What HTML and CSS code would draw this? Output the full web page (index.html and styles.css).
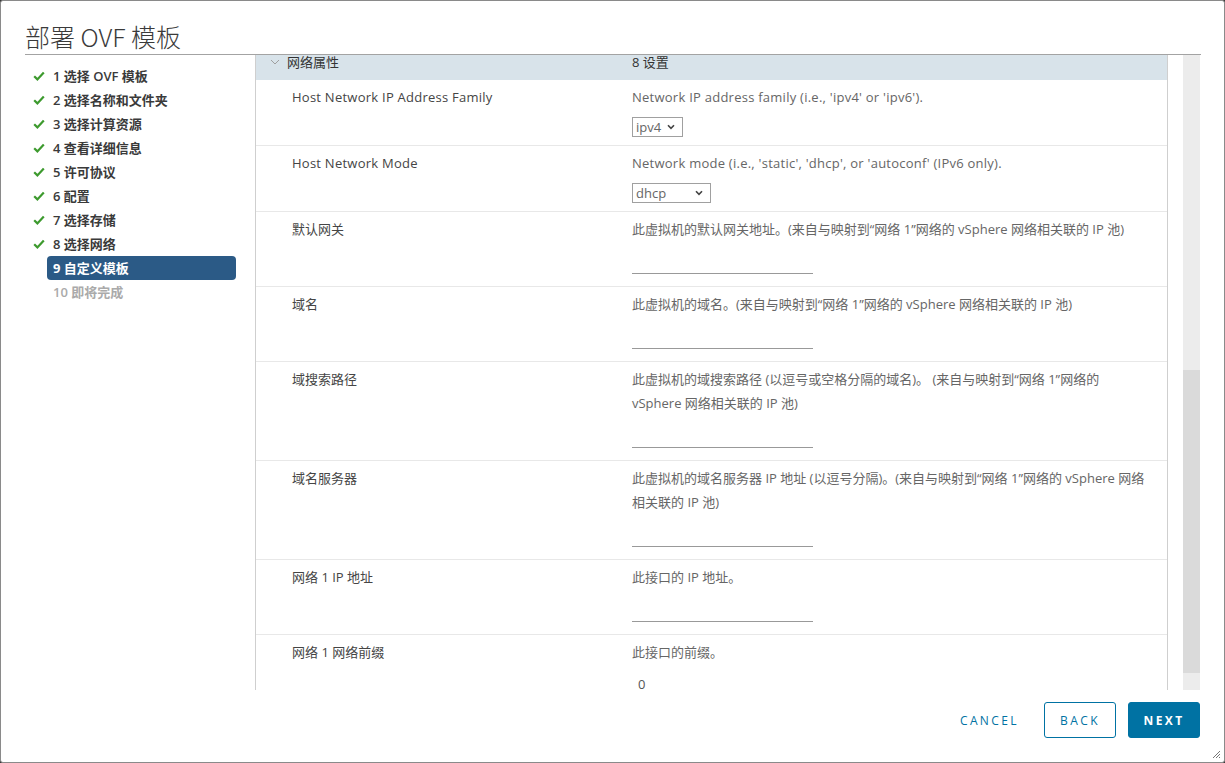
FILE: index.html
```html
<!DOCTYPE html>
<html lang="zh-CN">
<head>
<meta charset="utf-8">
<title>部署 OVF 模板</title>
<link rel="stylesheet" href="styles.css">
</head>
<body>
<div class="dialog">
  <div class="head"><h1 class="title">部署 OVF 模板</h1></div>
  <div class="body">
    <nav class="nav">
      <div class="step done"><svg class="chk" viewBox="0 0 12 10" width="12" height="10"><path d="M1.2 5.2 L4.4 8.4 L10.8 1.4" fill="none" stroke="#3d9a2e" stroke-width="2.2"/></svg><span class="lbl">1 选择 OVF 模板</span></div>
      <div class="step done"><svg class="chk" viewBox="0 0 12 10" width="12" height="10"><path d="M1.2 5.2 L4.4 8.4 L10.8 1.4" fill="none" stroke="#3d9a2e" stroke-width="2.2"/></svg><span class="lbl">2 选择名称和文件夹</span></div>
      <div class="step done"><svg class="chk" viewBox="0 0 12 10" width="12" height="10"><path d="M1.2 5.2 L4.4 8.4 L10.8 1.4" fill="none" stroke="#3d9a2e" stroke-width="2.2"/></svg><span class="lbl">3 选择计算资源</span></div>
      <div class="step done"><svg class="chk" viewBox="0 0 12 10" width="12" height="10"><path d="M1.2 5.2 L4.4 8.4 L10.8 1.4" fill="none" stroke="#3d9a2e" stroke-width="2.2"/></svg><span class="lbl">4 查看详细信息</span></div>
      <div class="step done"><svg class="chk" viewBox="0 0 12 10" width="12" height="10"><path d="M1.2 5.2 L4.4 8.4 L10.8 1.4" fill="none" stroke="#3d9a2e" stroke-width="2.2"/></svg><span class="lbl">5 许可协议</span></div>
      <div class="step done"><svg class="chk" viewBox="0 0 12 10" width="12" height="10"><path d="M1.2 5.2 L4.4 8.4 L10.8 1.4" fill="none" stroke="#3d9a2e" stroke-width="2.2"/></svg><span class="lbl">6 配置</span></div>
      <div class="step done"><svg class="chk" viewBox="0 0 12 10" width="12" height="10"><path d="M1.2 5.2 L4.4 8.4 L10.8 1.4" fill="none" stroke="#3d9a2e" stroke-width="2.2"/></svg><span class="lbl">7 选择存储</span></div>
      <div class="step done"><svg class="chk" viewBox="0 0 12 10" width="12" height="10"><path d="M1.2 5.2 L4.4 8.4 L10.8 1.4" fill="none" stroke="#3d9a2e" stroke-width="2.2"/></svg><span class="lbl">8 选择网络</span></div>
      <div class="step active"><span class="chk-space"></span><span class="lbl">9 自定义模板</span></div>
      <div class="step todo"><span class="chk-space"></span><span class="lbl">10 即将完成</span></div>
    </nav>
    <div class="panel">
      <div class="table">
        <div class="group">
          <svg class="caret" viewBox="0 0 10 6" width="10" height="6"><path d="M1 1 L5 5 L9 1" fill="none" stroke="#a0a0a0" stroke-width="1"/></svg>
          <span class="gname">网络属性</span>
          <span class="gcount">8 设置</span>
        </div>
        <div class="row sel">
          <div class="label en">Host Network IP Address Family</div>
          <div class="desc">
            <div class="text en">Network IP address family (i.e., 'ipv4' or 'ipv6').</div>
            <div class="select w-ipv4"><span>ipv4</span><svg viewBox="0 0 8 6" width="8" height="6"><path d="M1 1.2 L4 4.4 L7 1.2" fill="none" stroke="#444" stroke-width="1.6"/></svg></div>
          </div>
        </div>
        <div class="row sel">
          <div class="label en">Host Network Mode</div>
          <div class="desc">
            <div class="text en">Network mode (i.e., 'static', 'dhcp', or 'autoconf' (IPv6 only).</div>
            <div class="select w-dhcp"><span>dhcp</span><svg viewBox="0 0 8 6" width="8" height="6"><path d="M1 1.2 L4 4.4 L7 1.2" fill="none" stroke="#444" stroke-width="1.6"/></svg></div>
          </div>
        </div>
        <div class="row inp">
          <div class="label">默认网关</div>
          <div class="desc">
            <div class="text">此虚拟机的默认网关地址。(来自与映射到“网络 1”网络的 vSphere 网络相关联的 IP 池)</div>
            <div class="input"></div>
          </div>
        </div>
        <div class="row inp">
          <div class="label">域名</div>
          <div class="desc">
            <div class="text">此虚拟机的域名。(来自与映射到“网络 1”网络的 vSphere 网络相关联的 IP 池)</div>
            <div class="input"></div>
          </div>
        </div>
        <div class="row inp">
          <div class="label">域搜索路径</div>
          <div class="desc">
            <div class="text">此虚拟机的域搜索路径 (以逗号或空格分隔的域名)。 (来自与映射到“网络 1”网络的 vSphere 网络相关联的 IP 池)</div>
            <div class="input"></div>
          </div>
        </div>
        <div class="row inp">
          <div class="label">域名服务器</div>
          <div class="desc">
            <div class="text">此虚拟机的域名服务器 IP 地址 (以逗号分隔)。(来自与映射到“网络 1”网络的 vSphere 网络相关联的 IP 池)</div>
            <div class="input"></div>
          </div>
        </div>
        <div class="row inp">
          <div class="label">网络 1 IP 地址</div>
          <div class="desc">
            <div class="text">此接口的 IP 地址。</div>
            <div class="input"></div>
          </div>
        </div>
        <div class="row inp">
          <div class="label">网络 1 网络前缀</div>
          <div class="desc">
            <div class="text">此接口的前缀。</div>
            <div class="input">0</div>
          </div>
        </div>
      </div>
      <div class="scrollbar"><div class="thumb"></div></div>
    </div>
  </div>
  <div class="foot">
    <button class="btn flat">Cancel</button>
    <button class="btn outline">Back</button>
    <button class="btn primary">Next</button>
  </div>
  <svg class="grip" viewBox="0 0 10 10" width="10" height="10"><path d="M9 2 L2 9 M9 5 L5 9 M9 8 L8 9" stroke="#777" stroke-width="1"/></svg>
</div>
</body>
</html>
```
FILE: styles.css
```css
html, body {
  margin: 0;
  padding: 0;
  background: #3a3a3a;
}
body {
  font-family: "Open Sans", "Noto Sans CJK SC", sans-serif;
  font-size: 13px;
  color: #454545;
}
.dialog {
  position: relative;
  width: 1225px;
  height: 763px;
  box-sizing: border-box;
  background: #fff;
  border: 1px solid #8a8a8a;
  border-radius: 3px;
  display: flex;
  flex-direction: column;
  overflow: hidden;
}
.head {
  height: 54px;
  box-sizing: border-box;
  margin: 0 23px 0 24px;
  border-bottom: 1px solid #a3a3a3;
  padding-top: 19px;
}
.title {
  margin: 0;
  font-size: 25px;
  line-height: 32px;
  font-weight: 300;
  color: #3a3a3a;
  font-family: "Noto Sans CJK SC", "Open Sans", sans-serif;
}
.body {
  display: flex;
  height: 635px;
  margin: 0 23px 0 24px;
}
.nav {
  width: 230px;
  flex: none;
  padding: 9px 0 0 8px;
  box-sizing: border-box;
}
.step {
  display: flex;
  align-items: center;
  height: 24px;
}
.chk, .chk-space {
  width: 12px;
  height: 10px;
  flex: none;
  margin-right: 2px;
}
.lbl {
  width: 177px;
  height: 24px;
  line-height: 24px;
  padding: 0 6px;
  border-radius: 4px;
  font-weight: 600;
  color: #3a3a3a;
  white-space: nowrap;
}
.step.active .lbl {
  background: #2b5a86;
  color: #fff;
  font-weight: 700;
}
.step.todo .lbl {
  color: #aaa;
}
.panel {
  flex: 1;
  display: flex;
  min-width: 0;
}
.table {
  width: 913px;
  flex: none;
  box-sizing: border-box;
  border-left: 1px solid #cfcfcf;
  border-right: 1px solid #cfcfcf;
  overflow: hidden;
}
.group {
  height: 25px;
  background: #d8e3ea;
  display: flex;
  align-items: flex-start;
  line-height: 15px;
  color: #333;
  padding-left: 14px;
}
.caret {
  margin: 4px 7px 0 0;
  flex: none;
}
.gname {
  width: 345px;
}
.row {
  display: grid;
  grid-template-columns: 340px 1fr;
  padding: 5px 18px 8px 36px;
  border-bottom: 1px solid #e8e8e8;
}
.row.inp {
  padding-bottom: 12px;
}
.en {
  letter-spacing: 0.25px;
}
.label {
  line-height: 24px;
  color: #454545;
}
.desc .text {
  line-height: 24px;
  color: #666;
}
.select {
  margin-top: 8px;
  height: 20px;
  box-sizing: border-box;
  border: 1px solid #a0a0a0;
  display: flex;
  align-items: center;
  justify-content: space-between;
  padding: 0 7px 0 3px;
  color: #666;
  line-height: 18px;
}
.w-ipv4 { width: 51px; }
.w-dhcp { width: 79px; }
.input {
  margin-top: 9px;
  width: 181px;
  height: 24px;
  box-sizing: border-box;
  border-bottom: 1px solid #999;
  padding-left: 6px;
  line-height: 22px;
  color: #555;
}
.scrollbar {
  width: 17px;
  margin-left: 15px;
  background: #ececec;
  flex: none;
  padding-top: 315px;
  box-sizing: border-box;
}
.thumb {
  height: 303px;
  background: #dadada;
}
.foot {
  flex: 1;
  display: flex;
  justify-content: flex-end;
  align-items: flex-start;
  gap: 12px;
  padding: 12px 24px 0 0;
}
.btn {
  height: 36px;
  min-width: 72px;
  padding: 0 12px;
  box-sizing: border-box;
  border-radius: 3px;
  font-family: "Open Sans", sans-serif;
  font-size: 12px;
  font-weight: 600;
  letter-spacing: 0.2em;
  text-transform: uppercase;
  cursor: pointer;
}
.btn.flat {
  background: transparent;
  border: 1px solid transparent;
  color: #0072a3;
  font-weight: 500;
}
.btn.outline {
  background: #fff;
  border: 1px solid #0072a3;
  color: #0072a3;
  font-weight: 500;
}
.btn.primary {
  background: #0072a3;
  border: 1px solid #0072a3;
  color: #fff;
  font-weight: 700;
}
.grip {
  position: absolute;
  right: 3px;
  bottom: 3px;
}
```
